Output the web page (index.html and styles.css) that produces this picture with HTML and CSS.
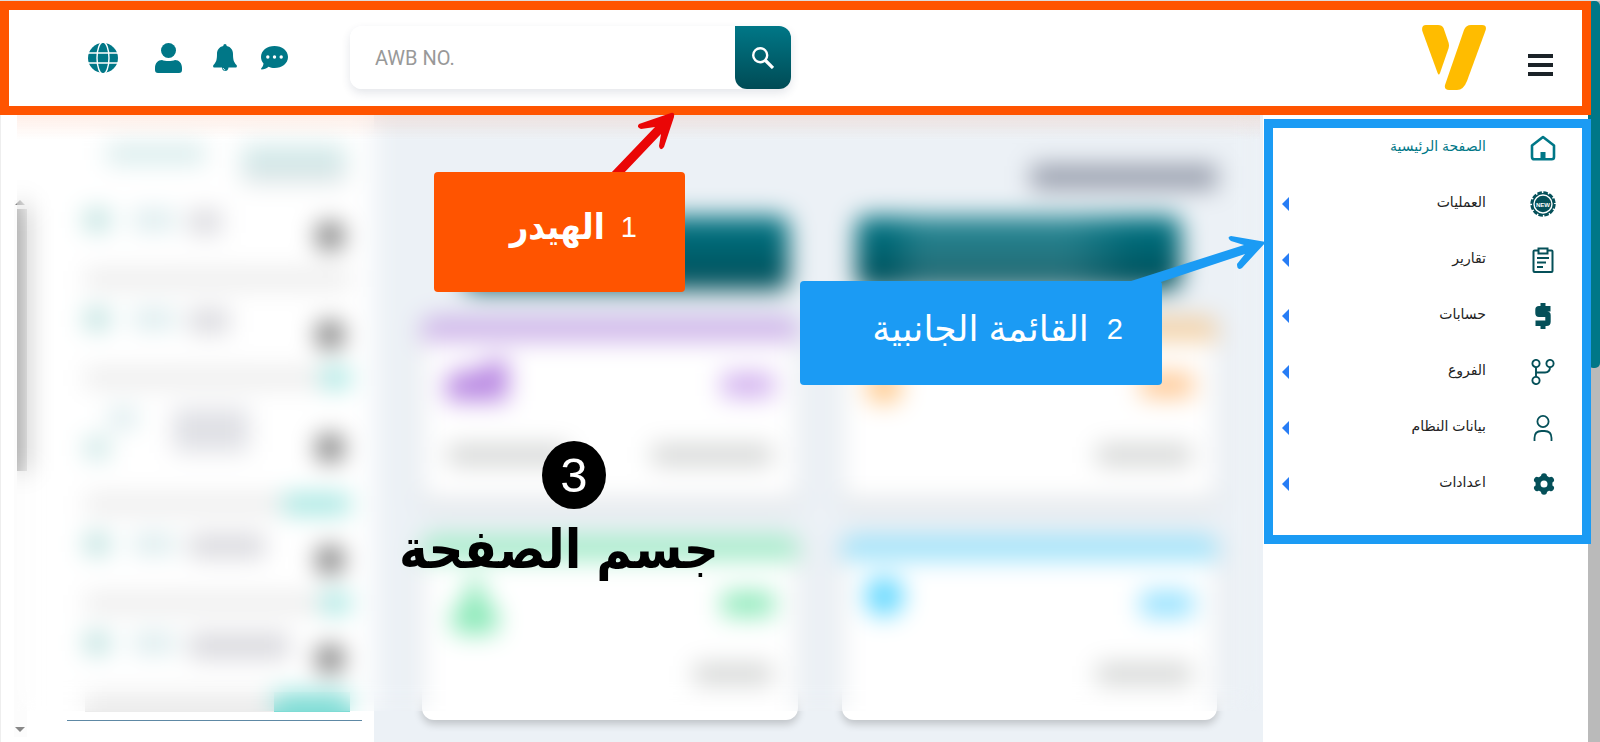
FILE: index.html
```
<!DOCTYPE html>
<html lang="ar">
<head>
<meta charset="utf-8">
<title>لوحة التحكم</title>
<link rel="stylesheet" href="styles.css">
</head>
<body>
<div class="page">
  <div class="window">
    <header class="header">
      <div class="tools">
        <button class="tool globe" aria-label="اللغة"><svg width="30" height="30" viewBox="0 0 30 30"><circle cx="15" cy="15" r="15" fill="#007787"/><g fill="none" stroke="#fff" stroke-width="1.4"><ellipse cx="15" cy="15" rx="6" ry="16"/><path d="M0 10h30M0 20h30"/></g></svg></button>
        <button class="tool user" aria-label="الحساب"><svg width="27" height="30" viewBox="0 0 27 30" fill="#007787"><circle cx="13.500" cy="7.500" r="7.500"/><path d="M7 17c3 1.300 10 1.300 13 0 4 0 7 3 7 8v2c0 2-1 3-3 3H3c-2 0-3-1-3-3v-2c0-5 3-8 7-8z"/></svg></button>
        <button class="tool bell" aria-label="الإشعارات"><svg width="24" height="28" viewBox="0 0 24 28" fill="#007787"><path d="M12 0c1 0 1.700.8 1.700 2C18 3 20 6 20 10c0 6 .8 8 3.500 11 .8 1.200.3 2.500-1 2.500h-21C.2 23.500-.3 22.200.5 21 3.200 18 4 16 4 10c0-4 2-7 6.300-8C10.300.8 11 0 12 0z"/><path d="M9 23h6.500c0 2.500-1.300 4-3.300 4S9 25.500 9 23z"/><path d="M10.300 24c.2 1.200.9 1.800 1.900 1.900" fill="none" stroke="#fff"/></svg></button>
        <button class="tool chat" aria-label="الرسائل"><svg width="27" height="24" viewBox="0 0 27 24"><path d="M13.500 0C21 0 27 4.500 27 11s-6 11-13.500 11c-2.200 0-4-.4-6-1.200C5.500 22.500 3 23.500.6 23.500c-.6 0-.8-.6-.4-1C1.500 21 2.300 19.500 2.500 17.500.9 15.600 0 13.500 0 11 0 4.500 6 0 13.500 0z" fill="#007787"/><g fill="#fff"><circle cx="6.800" cy="11" r="1.700"/><circle cx="13.500" cy="11" r="1.700"/><circle cx="20.200" cy="11" r="1.700"/></g></svg></button>
      </div>
      <form class="search">
        <input class="search-input" type="text" placeholder="AWB NO." aria-label="AWB NO.">
        <button class="search-button" type="button" aria-label="بحث"><svg width="22" height="22" viewBox="0 0 22 22" fill="none" stroke="#fff" stroke-width="2.400"><circle cx="8.200" cy="8.200" r="7"/><path d="M13 13l8 8" stroke-width="3.200"/></svg></button>
      </form>
      <a class="logo" href="#" aria-label="الرئيسية"><svg width="64" height="65" viewBox="0 0 64 65" fill="#ffbc00"><path d="M4 0h12q4 0 5.500 3l5 14.500q.9 3 0 6L18 48q-1.200 3-2.400 0L.3 6Q-.8 0 4 0z"/><path d="M49 0h11q5 0 3.700 5L45 56q-3.500 9-10 9h-8q-5 0-4-5L42 5q2-5 7-5z"/></svg></a>
      <button class="burger" aria-label="القائمة"><span></span><span></span><span></span></button>
    </header>

    <div class="body">
      <section class="activity">
        <div class="track"><i class="tri-up"></i><i class="thumb"></i><i class="tri-down"></i></div>
        <div class="feed">
          <div class="tabs"><i></i><i class="current"></i></div>
          <div class="item"><div class="row"><i class="badge"></i><i class="time"></i><i class="name short"></i><i class="avatar"></i></div><div class="bar"></div></div>
          <div class="item"><div class="row"><i class="badge"></i><i class="time"></i><i class="name mid"></i><i class="avatar"></i></div><div class="bar"><i class="fill small"></i></div></div>
          <div class="item tall"><div class="row"><i class="badge low"></i><i class="time near"></i><i class="name block"></i><i class="avatar"></i></div><div class="bar"><i class="fill mid"></i></div></div>
          <div class="item"><div class="row"><i class="badge"></i><i class="time"></i><i class="name wide"></i><i class="avatar"></i></div><div class="bar"><i class="fill small"></i></div></div>
          <div class="item"><div class="row"><i class="badge"></i><i class="time"></i><i class="name full"></i><i class="avatar"></i></div><div class="bar"><i class="fill large"></i></div></div>
          <hr class="rule">
        </div>
      </section>

      <main class="main">
        <div class="title"></div>
        <div class="actions"><i class="action"></i><i class="action lit"></i></div>
        <div class="cards">
          <article class="card purple"><div class="stripe"></div><div class="top"><svg width="64" height="44" viewBox="0 0 64 44"><path d="M0 18 20 10 36 14V4L62 0v42H0z" fill="#b887e2"/></svg><i class="count"></i></div><div class="captions"><i class="caption long"></i><i class="caption long"></i></div></article>
          <article class="card orange"><div class="stripe"></div><div class="top"><svg width="64" height="44" viewBox="0 0 64 44"><circle cx="18" cy="28" r="18" fill="#ffc98c"/></svg><i class="count"></i></div><div class="captions"><i class="caption"></i></div></article>
          <article class="card green"><div class="stripe"></div><div class="top"><svg width="64" height="60" viewBox="0 0 64 60"><path d="M22 0h14v16l16 20q4 20-12 20H18Q2 56 6 36l16-20z" fill="#8ae9b8"/></svg><i class="count"></i></div><div class="captions"><i class="caption small"></i></div></article>
          <article class="card blue"><div class="stripe"></div><div class="top"><svg width="64" height="44" viewBox="0 0 64 44"><circle cx="18" cy="18" r="20" fill="#63d8ff"/></svg><i class="count"></i></div><div class="captions"><i class="caption"></i></div></article>
        </div>
      </main>

      <aside class="side">
        <nav class="menu" dir="rtl">
          <a class="entry active" href="#"><svg width="26" height="26" viewBox="0 0 26 26"><path d="M2 10.500 13 2l11 8.500V22q0 2.300-2.300 2.300H4.300Q2 24.300 2 22z" fill="none" stroke="#007787" stroke-width="2.600" stroke-linejoin="round"/><path d="M10.500 24v-7h5v7z" fill="#007787"/></svg><span>الصفحة الرئيسية</span></a>
          <button class="entry"><svg width="26" height="26" viewBox="0 0 26 26"><circle cx="13" cy="13" r="11" fill="#055059"/><circle cx="13" cy="13" r="11.200" fill="none" stroke="#055059" stroke-width="3" stroke-dasharray="4.400 1.464"/><circle cx="13" cy="13" r="9" fill="none" stroke="#fff" stroke-width="1.400"/><text x="13" y="15.500" text-anchor="middle" class="new">NEW</text></svg><span>العمليات</span><i></i></button>
          <button class="entry"><svg width="26" height="26" viewBox="0 0 26 26" fill="none" stroke="#055059" stroke-width="2"><path d="M8 3.500H4.500q-1 0-1 1V24q0 1 1 1h17q1 0 1-1V4.500q0-1-1-1H18"/><path d="M8.500 1.500h9v5h-9z"/><path d="M7 11h12M7 15.500h9M7 20h6"/></svg><span>تقارير</span><i></i></button>
          <button class="entry"><svg width="26" height="26" viewBox="0 0 26 26" fill="none" stroke="#055059"><path d="M20.500 5.700H9q-1 0-1 1v3.600q0 1 1 1h8q1 0 1 1v6.500q0 1.500-1.500 1.500h-11" stroke-width="5.400"/><path d="M13 0v5M13 21v5" stroke-width="5"/></svg><span>حسابات</span><i></i></button>
          <button class="entry"><svg width="26" height="26" viewBox="0 0 26 26" fill="none" stroke="#055059" stroke-width="1.900"><circle cx="6" cy="4.500" r="3.600"/><circle cx="20" cy="4.500" r="3.600"/><circle cx="6" cy="21.500" r="3.600"/><path d="M6 8v10M6 13.500h9q5 0 5-5.400"/></svg><span>الفروع</span><i></i></button>
          <button class="entry"><svg width="26" height="26" viewBox="0 0 26 26" fill="none" stroke="#055059" stroke-width="1.800"><circle cx="13" cy="6.500" r="5.600"/><path d="M4.500 26v-3q0-7 7-7h3q7 0 7 7v3"/></svg><span>بيانات النظام</span><i></i></button>
          <button class="entry"><svg width="26" height="26" viewBox="0 0 26 26"><circle cx="14" cy="13" r="6" fill="none" stroke="#055059" stroke-width="5"/><g stroke="#055059" stroke-width="6" stroke-linecap="round"><path d="M14 5.200v.6M14 20.200v.6M7 8.900l.9.500M20.100 16.600l.9.500M7 17.100l.9-.5M20.100 9.400l.9-.5"/></g></svg><span>اعدادات</span><i></i></button>
        </nav>
      </aside>

      <div class="veil"></div>

      <div class="notes">
        <svg class="pointer red" width="66" height="62" viewBox="609 112 66 62"><path d="M610 174 655 127 641 129Q636 127 639 124L671 113Q675 112 674 117L664 147Q660 152 659 146L661 134 623 174z" fill="#ea0606"/></svg>
        <div class="note first" dir="rtl"><span class="digit">1</span><strong>الهيدر</strong></div>
        <svg class="pointer sky" width="138" height="50" viewBox="1128 235 138 50"><path d="M1128 282 1244 245 1231 241Q1226 237 1231 236L1266 242 1242 268Q1237 271 1237 264L1245 254 1158 283z" fill="#1b9bf4"/></svg>
        <div class="note second" dir="rtl"><span class="digit">2</span><span>القائمة الجانبية</span></div>
        <div class="third" dir="rtl"><span class="disc">3</span><strong>جسم الصفحة</strong></div>
      </div>
    </div>
  </div>
  <div class="scroll"><i></i></div>
</div>
</body>
</html>
```
FILE: styles.css
```
* { box-sizing: border-box; }
body { margin: 0; font-family: "Liberation Sans", "DejaVu Sans", sans-serif; background: #fff; }
i { display: block; flex: none; }
button { border: 0; padding: 0; background: none; font: inherit; color: inherit; }
svg { display: block; flex: none; }
.page { display: flex; min-height: 100vh; border-top: 1px solid #ddd; overflow: hidden; }
.window { flex: 1; display: flex; flex-direction: column; min-width: 0; }
.scroll { width: 12px; background: #bababa; }
.scroll i { height: 367px; background: #007787; border-radius: 5px; }

/* header */
.header { position: relative; z-index: 3; display: flex; align-items: center; margin-right: -3px; padding: 15px 29px 16px 79px; border: 9px solid #ff5400; background: #fff; }
.tools { display: flex; align-items: center; }
.user { margin-left: 37px; }
.bell { margin-left: 31px; }
.chat { margin-left: 24px; }
.search { display: flex; width: 441px; height: 63px; margin-left: 62px; border-radius: 12px; box-shadow: 0 4px 10px rgba(30, 50, 80, .12); }
.search-input { flex: 1; min-width: 0; border: 0; outline: 0; border-radius: 12px 0 0 12px; padding: 0 25px; font: 20px Roboto, sans-serif; background: #fff; }
.search-input::placeholder { color: #999; opacity: 1; }
.search-button { display: grid; place-items: center; width: 56px; border-radius: 0 12px 12px 12px; background: linear-gradient(#007787, #004b55); }
.logo { margin-left: auto; }
.burger { display: grid; gap: 5px; width: 25px; margin: 14px 0 0 42px; }
.burger span { height: 4px; background: #1b2228; }

/* body columns */
.body { position: relative; flex: 1; display: flex; }
.activity { width: 374px; display: flex; padding-left: 13px; border-left: 1px solid #eee; background: #fff; }
.track { width: 13px; display: flex; flex-direction: column; align-items: flex-end; margin: 85px 0 5px; background: #fcfcfc; }
.tri-up { margin-right: 2px; border: 5px solid transparent; border-top: 0; border-bottom-color: #888; }
.thumb { width: 10px; height: 262px; margin-top: 4px; background: #aaa; }
.tri-down { margin: auto 2px 5px 0; border: 5px solid transparent; border-bottom: 0; border-top-color: #888; }
.feed { flex: 1; padding: 0 12px 21px 40px; }
.tabs { display: flex; height: 75px; padding: 30px 16px 0 40px; justify-content: space-between; }
.tabs i { width: 98px; height: 18px; background: #d2e9e9; }
.tabs .current { width: 104px; height: 38px; border-bottom: 12px solid #dbe2e4; }
.item { margin: 0 12px 0 18px; }
.row { display: flex; height: 79px; padding-top: 20px; }
.tall .row { height: 106px; }
.badge { width: 24px; height: 20px; background: #b2dcd9; }
.time { width: 42px; height: 20px; margin: 0 14px 0 24px; background: #d8eaec; }
.name { height: 24px; background: #d8d8dd; }
.name.short { width: 32px; }
.name.mid { width: 40px; }
.name.wide { width: 76px; }
.name.full { width: 100px; height: 26px; }
.name.block { width: 76px; height: 44px; background: #dfe0e5; }
.badge.low { margin-top: 30px; background: #c5e4e2; }
.time.near { width: 28px; margin: 0 36px 0 0; }
.avatar { width: 28px; height: 28px; margin: 12px 6px 0 auto; border-radius: 50%; background: #707070; }
.tall .avatar { margin-top: 26px; }
.bar { display: flex; justify-content: flex-end; height: 20px; background: #ececec; }
.fill { height: 20px; background: #9ee5df; }
.fill.small { width: 28px; }
.fill.mid { width: 66px; }
.fill.large { width: 76px; background: #7fdcd5; }
.rule { height: 1px; margin: 8px 0 0; border: 0; background: #5e89a5; }

.main { flex: 1; min-width: 0; padding: 50px 46px 20px 48px; background: #ecf1f6; }
.title { width: 186px; height: 24px; margin: 0 0 27px auto; background: #959baa; }
.actions { display: flex; justify-content: space-between; padding: 0 36px 0 42px; }
.action { width: 325px; height: 74px; border-radius: 10px; background: linear-gradient(#007787, #004b55); }
.action.lit { background: linear-gradient(90deg, transparent 10%, rgba(255, 255, 255, .14) 20% 65%, transparent 85%), linear-gradient(#007787, #004b55); }
.cards { display: grid; grid-template-columns: 1fr 1fr; gap: 35px 44px; margin-top: 27px; }
.card { height: 184px; border-radius: 12px; overflow: hidden; background: #fff; box-shadow: 0 4px 8px rgba(0, 0, 0, .2); }
.stripe { height: 24px; background: var(--line); }
.top { display: flex; justify-content: space-between; align-items: flex-start; height: 80px; padding: 18px 24px 0; }
.count { width: 52px; height: 24px; margin-top: 14px; background: var(--num); }
.captions { display: flex; justify-content: space-between; padding: 24px 26px; }
.caption { width: 94px; height: 20px; margin-left: auto; background: #d2d4d3; }
.caption.long { width: 120px; margin-left: 0; }
.caption.small { width: 78px; }
.purple { --line: #cdb2e9; --num: #d0aeee; }
.orange { --line: #f3d1a6; --num: #ffc791; }
.green { --line: #a2ebc8; --num: #8ae9b8; }
.blue { --line: #9de2fa; --num: #8fe0ff; }

/* menu */
.side { width: 325px; background: #fff; border-bottom-left-radius: 10px; }
.menu { position: relative; z-index: 3; display: grid; gap: 18px; margin: 4px -3px 0 1px; padding: 1px 26px 32px 9px; border: 9px solid #1b9bf4; background: #fff; }
.entry { display: flex; align-items: center; height: 38px; font-size: 14px; color: #222; text-decoration: none; }
.entry span { margin: 0 44px 4px auto; }
.entry i { border: 7px solid transparent; border-left: 0; border-right-color: #277df5; }
.entry.active { color: #007787; }
.new { font: bold 6px "Liberation Sans", sans-serif; fill: #fff; }

/* frosted pane over the dashboard */
.veil { position: absolute; z-index: 2; inset: -1px 328px 31px 17px; backdrop-filter: blur(12px); background: linear-gradient(rgba(255, 90, 20, .1), transparent 26px); }

/* annotations */
.notes { position: absolute; z-index: 4; inset: 0; pointer-events: none; color: #fff; }
.pointer { position: absolute; }
.red { left: 609px; top: -3px; }
.sky { right: 322px; top: 120px; }
.note { position: absolute; display: flex; align-items: center; border-radius: 4px; white-space: nowrap; }
.first { left: 434px; top: 57px; width: 251px; height: 120px; padding: 0 48px 10px; gap: 16px; font: 36px "Liberation Sans", "DejaVu Sans Condensed", "DejaVu Sans", sans-serif; background: #ff5400; }
.second { left: 800px; top: 166px; width: 362px; height: 104px; padding: 0 39px 8px; gap: 18px; font-size: 36px; background: #1b9bf4; }
.digit { font-size: 29px; }
.third { position: absolute; left: 404px; top: 326px; width: 310px; display: flex; flex-direction: column; align-items: center; color: #000; font: 54px/80px "Liberation Sans", "DejaVu Sans Condensed", "DejaVu Sans", sans-serif; white-space: nowrap; }
.disc { width: 64px; height: 68px; margin-right: -30px; border-radius: 50%; background: #000; font-size: 49px; line-height: 68px; text-align: center; color: #fff; }
```
